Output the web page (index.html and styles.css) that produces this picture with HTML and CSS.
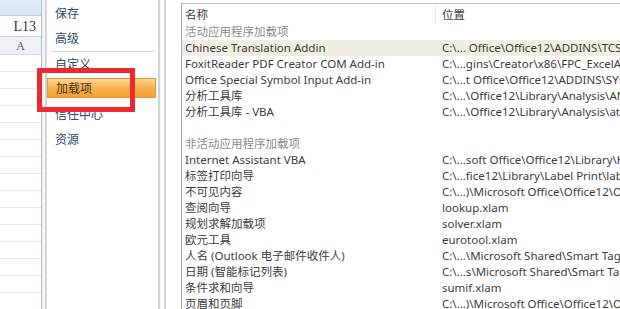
FILE: index.html
```html
<!DOCTYPE html>
<html lang="zh-CN">
<head>
    <meta charset="UTF-8">
    <title>Excel 选项 - 加载项</title>
    <link rel="stylesheet" href="styles.css">
</head>
<body>
    <div class="window">
        <div class="sheet">
            <div class="sheet-top"></div>
            <div class="namebox">L13</div>
            <div class="colhead">A</div>
            <div class="cell"></div>
            <div class="cell"></div>
            <div class="cell"></div>
            <div class="cell"></div>
            <div class="cell"></div>
            <div class="cell"></div>
            <div class="cell"></div>
            <div class="cell"></div>
            <div class="cell"></div>
            <div class="cell"></div>
            <div class="cell"></div>
            <div class="cell"></div>
            <div class="cell"></div>
            <div class="cell"></div>
            <div class="cell"></div>
        </div>
        <div class="sheet-gap"></div>
        <div class="nav">
            <div class="nav-item">保存</div>
            <div class="nav-item">高级</div>
            <div class="nav-sep"></div>
            <div class="nav-item">自定义</div>
            <div class="nav-item on">加载项</div>
            <div class="nav-item">信任中心</div>
            <div class="nav-item">资源</div>
        </div>
        <div class="divider"></div>
        <div class="content">
            <div class="addins">
                <div class="row head">
                    <span class="name">名称</span>
                    <span class="loc">位置</span>
                </div>
                <div class="row group"><span class="name">活动应用程序加载项</span></div>
                <div class="row sel">
                    <span class="name">Chinese Translation Addin</span>
                    <span class="loc">C:\... Office\Office12\ADDINS\TCSCCONV.XLL</span>
                </div>
                <div class="row">
                    <span class="name">FoxitReader PDF Creator COM Add-in</span>
                    <span class="loc">C:\...gins\Creator\x86\FPC_ExcelAddin.dll</span>
                </div>
                <div class="row">
                    <span class="name">Office Special Symbol Input Add-in</span>
                    <span class="loc">C:\...t Office\Office12\ADDINS\SYMINPUT.DLL</span>
                </div>
                <div class="row">
                    <span class="name">分析工具库</span>
                    <span class="loc">C:\...\Office12\Library\Analysis\ANALYS32.XLL</span>
                </div>
                <div class="row">
                    <span class="name">分析工具库 - VBA</span>
                    <span class="loc">C:\...\Office12\Library\Analysis\atpvbaen.xlam</span>
                </div>
                <div class="row"></div>
                <div class="row group"><span class="name">非活动应用程序加载项</span></div>
                <div class="row">
                    <span class="name">Internet Assistant VBA</span>
                    <span class="loc">C:\...soft Office\Office12\Library\HTML.XLAM</span>
                </div>
                <div class="row">
                    <span class="name">标签打印向导</span>
                    <span class="loc">C:\...fice12\Library\Label Print\label.xlam</span>
                </div>
                <div class="row">
                    <span class="name">不可见内容</span>
                    <span class="loc">C:\...)\Microsoft Office\Office12\OFFRHD.DLL</span>
                </div>
                <div class="row">
                    <span class="name">查阅向导</span>
                    <span class="loc">lookup.xlam</span>
                </div>
                <div class="row">
                    <span class="name">规划求解加载项</span>
                    <span class="loc">solver.xlam</span>
                </div>
                <div class="row">
                    <span class="name">欧元工具</span>
                    <span class="loc">eurotool.xlam</span>
                </div>
                <div class="row">
                    <span class="name">人名 (Outlook 电子邮件收件人)</span>
                    <span class="loc">C:\...\Microsoft Shared\Smart Tag\FNAME.DLL</span>
                </div>
                <div class="row">
                    <span class="name">日期 (智能标记列表)</span>
                    <span class="loc">C:\...s\Microsoft Shared\Smart Tag\MOFL.DLL</span>
                </div>
                <div class="row">
                    <span class="name">条件求和向导</span>
                    <span class="loc">sumif.xlam</span>
                </div>
                <div class="row">
                    <span class="name">页眉和页脚</span>
                    <span class="loc">C:\...)\Microsoft Office\Office12\OFFRHD.DLL</span>
                </div>
            </div>
        </div>
        <div class="mark"></div>
    </div>
</body>
</html>
```

FILE: styles.css
```css
* {
    margin: 0px;
    padding: 0px;
    box-sizing: border-box;
}
body {
    background: #fff;
    overflow: hidden;
    font-family: "Noto Sans", "Noto Sans CJK SC", sans-serif;
    color: #3c3c3c;
}
.window {
    position: relative;
    display: flex;
    width: 620px;
    height: 309px;
    overflow: hidden;
}

/* 左侧表格 */
.sheet {
    width: 42px;
    flex: none;
    border-right: 1px solid #a9c1de;
    background: #fff;
}
.sheet-top {
    height: 16px;
    background: linear-gradient(#e6eef8, #d6e3f2);
    border-bottom: 1px solid #b9cce2;
}
.namebox {
    height: 21px;
    padding-right: 5px;
    text-align: right;
    font-family: "Liberation Serif", serif;
    font-size: 14px;
    line-height: 21px;
    color: #333;
    border-bottom: 1px solid #c5d3e3;
}
.colhead {
    height: 18px;
    text-align: center;
    font-family: "Liberation Serif", serif;
    font-size: 12px;
    line-height: 18px;
    color: #555;
    background: #eef2f7;
    border-bottom: 1px solid #d5dde7;
}
.cell {
    height: 17px;
    border-bottom: 1px solid #e4e6e9;
}
.sheet-gap {
    width: 5px;
    flex: none;
    background: linear-gradient(90deg, #eef3f8, #f6f6f6);
    border-right: 2px solid #d6d6d6;
}

/* 选项导航 */
.nav {
    width: 111px;
    flex: none;
    padding-top: 1px;
    font-size: 12px;
}
.nav-item {
    height: 25px;
    line-height: 25px;
    padding-left: 8px;
    color: #2f4a6b;
}
.nav-sep {
    height: 1px;
    margin: 0 3px 0 4px;
    background: #d9d9d9;
}
.nav-item.on {
    height: 20px;
    line-height: 20px;
    margin: 1px 2px 4px 0;
    color: #4a3214;
    background: linear-gradient(#fcd597, #f8ae48 55%, #f7a03a);
    border: 1px solid #e5943a;
}
.divider {
    width: 23px;
    flex: none;
    border-left: 2px solid #d3d3d3;
    background: linear-gradient(90deg, #fff 0, #fff 4px, #d5d5d5 4px, #d5d5d5 6px, #fff 6px);
}

/* 加载项列表 */
.content {
    flex: 1;
    min-width: 0;
    padding-top: 3px;
}
.addins {
    height: 100%;
    border-top: 1px solid #b9b9b9;
    border-left: 1px solid #a9a9a9;
    font-size: 11.5px;
}
.row {
    display: flex;
    height: 16px;
    line-height: 16px;
    white-space: nowrap;
}
.row .name {
    width: 254px;
    flex: none;
    padding-left: 3px;
    overflow: hidden;
}
.row .loc {
    padding-left: 6px;
}
.row.head {
    height: 20px;
    line-height: 21px;
}
.row.head .name {
    border-right: 1px solid #ececec;
}
.row.group {
    color: #8a8a8a;
}
.row.sel {
    background: #efeee3;
}

/* 红框标注 */
.mark {
    position: absolute;
    left: 37px;
    top: 68px;
    width: 98px;
    height: 44px;
    border: 5px solid #ee2a2f;
}
```
